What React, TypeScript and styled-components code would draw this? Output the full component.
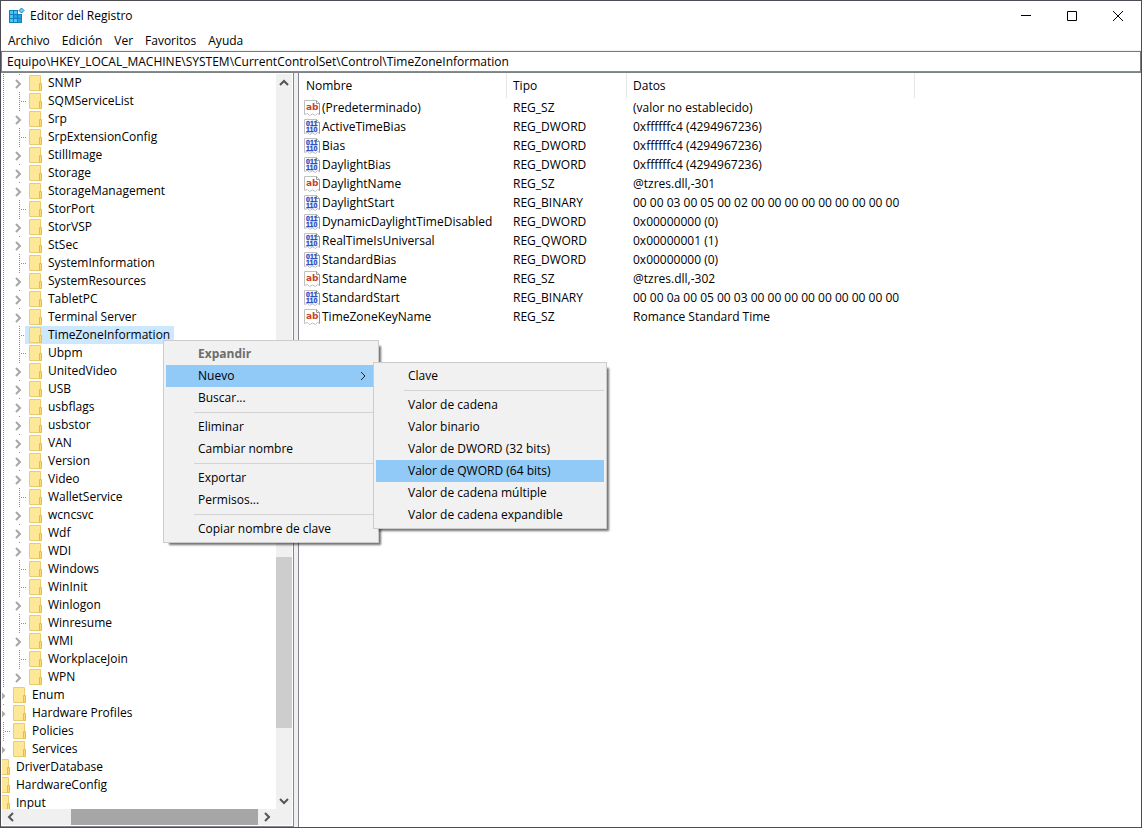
import React from 'react';
import styled, { createGlobalStyle, css } from 'styled-components';

const GlobalStyle = createGlobalStyle`
  * { box-sizing: border-box; }
  body { margin: 0; background: #fff; }
  body, button, input, table {
    font-family: "Open Sans", "Noto Sans", sans-serif;
    font-size: 12px;
    line-height: 18px;
    color: #000;
  }
  button { border: 0; padding: 0; background: none; }
  ul { list-style: none; margin: 0; padding: 0; }
`;

const Window = styled.div`
  position: relative;
  display: flex;
  flex-direction: column;
  height: 100vh;
  border: 1px solid #4b4c54;
  background: #fff;
  overflow: hidden;
`;

const TitleBar = styled.header`
  display: flex;
  align-items: center;
  height: 30px;
  padding-left: 8px;
`;

const Title = styled.h1`
  flex: 1;
  margin: 0;
  padding-left: 5px;
  font-size: 12px;
  font-weight: 400;
`;

const CaptionButton = styled.button`
  display: flex;
  align-items: center;
  justify-content: center;
  width: 46px;
  height: 28px;
`;

const MenuBar = styled.nav`
  display: flex;
  align-items: center;
  gap: 12px;
  height: 20px;
  padding-left: 7px;
  border-bottom: 1px solid #f0f0f0;
`;

const AddressBar = styled.input`
  width: 100%;
  height: 21px;
  padding: 0 5px;
  border: 1px solid #7a7a7a;
  border-bottom-color: #8a8a8a;
  background: #fff;
  outline: 0;
`;

const Panes = styled.main`
  flex: 1;
  display: flex;
  min-height: 0;
  border-top: 1px solid #7c8484;
`;

const TreePane = styled.section`
  display: grid;
  grid-template: minmax(0, 1fr) 16px / minmax(0, 1fr) 16px;
  flex: 0 0 293px;
  border: solid #828790;
  border-width: 0 1px 1px 0;
  padding: 1px;
`;

const Splitter = styled.div`
  flex: 0 0 4px;
  background: #f0f0f0;
`;

const TreeView = styled.div`
  overflow: hidden;
`;

const TreeList = styled.ul`
  margin-left: -7px;
`;

const TreeRow = styled.li`
  display: flex;
  height: 18px;
`;

const dots = css`
  background-image: repeating-linear-gradient(to bottom, #8c8c8c 0 1px, transparent 1px 2px);
  background-repeat: no-repeat;
  background-position: 8px 0;
`;

const Guide = styled.span<{ $short?: boolean }>`
  ${dots}
  display: flex;
  align-items: center;
  flex: 0 0 16px;
  background-size: 1px ${p => (p.$short ? '1px' : '100%')};
`;

const Branch = styled.span`
  width: 6px;
  height: 1px;
  margin-left: 9px;
  background: repeating-linear-gradient(to right, transparent 0 1px, #8c8c8c 1px 2px);
`;

const Expander = styled.button`
  display: flex;
  align-items: center;
  justify-content: center;
  width: 16px;
  height: 18px;
  padding: 2px 2px 0 0;
`;

const TreeLabel = styled.span<{ $selected?: boolean }>`
  display: flex;
  align-items: center;
  gap: 5px;
  margin-left: -2px;
  padding: 0 4px 0 2px;
  white-space: nowrap;
  background: ${p => (p.$selected ? '#cce8ff' : 'transparent')};
`;

const VScroll = styled.div`
  display: flex;
  flex-direction: column;
  background: #f0f0f0;
`;

const HScroll = styled.div`
  grid-column: 1 / -1;
  display: flex;
  padding-right: 17px;
  background: #f0f0f0;
`;

const ScrollButton = styled.button`
  display: flex;
  align-items: center;
  justify-content: center;
  flex: 0 0 17px;
`;

const Track = styled.div<{ $dir: 'row' | 'column' }>`
  flex: 1;
  display: flex;
  flex-direction: ${p => p.$dir};
`;

const Gap = styled.div<{ $grow: number }>`
  flex: ${p => p.$grow} 0 0;
`;

const Thumb = styled.div<{ $grow: number; $dark?: boolean }>`
  flex: ${p => p.$grow} 0 0;
  background: ${p => (p.$dark ? '#a6a6a6' : '#cdcdcd')};
`;

const ListPane = styled.section`
  flex: 1;
  min-width: 0;
  border-left: 1px solid #828790;
  overflow: hidden;
`;

const Table = styled.table`
  width: 100%;
  table-layout: fixed;
  border-collapse: separate;
  border-spacing: 0;
`;

const Col = styled.col<{ $w?: number }>`
  width: ${p => (p.$w ? p.$w + 'px' : 'auto')};
`;

const Th = styled.th`
  height: 25px;
  padding: 0 6px;
  border-right: 1px solid #e5e5e5;
  font-weight: 400;
  text-align: left;
  &:first-child { padding-left: 7px; }
  &:last-child { border-right: 0; }
`;

const Td = styled.td`
  height: 19px;
  padding: 0 6px;
  white-space: nowrap;
  line-height: 19px;
`;

const NameTd = styled(Td)`
  padding: 0 0 0 5px;
`;

const NameCell = styled.span`
  display: flex;
  align-items: center;
  gap: 2px;
`;

const Menu = styled.div<{ $left: number; $top: number; $width: number }>`
  position: absolute;
  left: ${p => p.$left}px;
  top: ${p => p.$top}px;
  width: ${p => p.$width}px;
  padding: 2px;
  border: 1px solid #ccc;
  background: #f1f1f1;
  box-shadow: 4px 4px 2px -2px rgba(0, 0, 0, 0.55);
`;

const MenuItem = styled.button<{ $active?: boolean }>`
  display: flex;
  align-items: center;
  justify-content: space-between;
  width: 100%;
  height: 22px;
  padding: 0 8px 0 32px;
  white-space: nowrap;
  background: ${p => (p.$active ? '#91c9f7' : 'transparent')};
  &:disabled { color: #6d6d6d; font-weight: 700; }
`;

const Separator = styled.hr`
  height: 1px;
  margin: 3px 0 3px 28px;
  border: 0;
  background: #d3d3d3;
`;

const RegistryIcon = () => (
  <svg width="16" height="16" viewBox="0 0 16 16" aria-hidden="true">
    <path d="M0 2h9v4h4v9H0z" fill="#0f7fc0" />
    <path d="M1 3h3v3H1zM5 3h3v3H5zM1 7h3v3H1zM1 11h3v3H1zM5 11h3v3H5z" fill="#4cc5f5" />
    <path d="M5 7h3v3H5zM9 7h3v3H9zM9 11h3v3H9z" fill="#22a0e0" />
    <path d="M12.500 0l2.500 2.500-2.500 2.500-2.500-2.500z" fill="#6fd2f5" stroke="#1583bd" />
  </svg>
);

const FolderIcon = () => (
  <svg width="16" height="18" viewBox="0 0 16 18" aria-hidden="true">
    <path d="M2.500 1.500h11v15h-11z" fill="#fee797" stroke="#e9cd74" />
    <path d="M12.500 9.500h2v7h-2z" fill="#fddc6b" stroke="#e6bd45" />
  </svg>
);

const Page = () => (
  <>
    <path d="M.5.5h12l3 3v11l-2-1-2 2-3-1.500-3 1.500-2-2-3 1z" fill="#fff" stroke="#c0c0c0" />
    <path d="M12.500.5v3h3v11" fill="none" stroke="#9a9a9a" />
  </>
);

const StringIcon = () => (
  <svg width="16" height="16" viewBox="0 0 16 16" aria-hidden="true">
    <Page />
    <text x="2" y="10" fontFamily="DejaVu Sans, sans-serif" fontWeight="700" fontSize="9" fill="#c8432b">ab</text>
  </svg>
);

const BinaryIcon = () => (
  <svg width="16" height="16" viewBox="0 0 16 16" aria-hidden="true">
    <Page />
    <g fontFamily="Liberation Sans, sans-serif" fontWeight="700" fontSize="7" fill="#1f4fc4" stroke="#1f4fc4" strokeWidth="0.300">
      <text x="2" y="7">011</text>
      <text x="2" y="13">110</text>
    </g>
  </svg>
);

const chevrons = {
  up: 'M1 7l4-4 4 4',
  down: 'M1 3l4 4 4-4',
  left: 'M7 1L3 5l4 4',
  right: 'M3 1l4 4-4 4',
};

const Chevron = ({ dir, color = '#555', width = 2 }: {
  dir: keyof typeof chevrons; color?: string; width?: number;
}) => (
  <svg width="10" height="10" viewBox="0 0 10 10" aria-hidden="true">
    <path d={chevrons[dir]} fill="none" stroke={color} strokeWidth={width} />
  </svg>
);

type Node = { name: string; level: 0 | 1 | 2; open: boolean };

// A leading "+" marks a key that has subkeys.
const controlKeys = [
  '+SNMP', 'SQMServiceList', '+Srp', 'SrpExtensionConfig', '+StillImage', '+Storage',
  '+StorageManagement', 'StorPort', '+StorVSP', '+StSec', 'SystemInformation',
  '+SystemResources', '+TabletPC', '+Terminal Server', 'TimeZoneInformation', 'Ubpm',
  '+UnitedVideo', '+USB', '+usbflags', '+usbstor', '+VAN', '+Version', '+Video',
  'WalletService', '+wcncsvc', '+Wdf', '+WDI', 'Windows', 'WinInit', '+Winlogon',
  'Winresume', '+WMI', 'WorkplaceJoin', '+WPN',
];
const toNodes = (names: string[], level: Node['level']): Node[] =>
  names.map(n => ({ name: n.replace('+', ''), level, open: n.startsWith('+') }));

const nodes: Node[] = [
  ...toNodes(controlKeys, 2),
  ...toNodes(['+Enum', '+Hardware Profiles', 'Policies', '+Services'], 1),
  ...toNodes(['DriverDatabase', 'HardwareConfig', 'Input'], 0),
];

const values: [string, string, string][] = [
  ['(Predeterminado)', 'REG_SZ', '(valor no establecido)'],
  ['ActiveTimeBias', 'REG_DWORD', '0xffffffc4 (4294967236)'],
  ['Bias', 'REG_DWORD', '0xffffffc4 (4294967236)'],
  ['DaylightBias', 'REG_DWORD', '0xffffffc4 (4294967236)'],
  ['DaylightName', 'REG_SZ', '@tzres.dll,-301'],
  ['DaylightStart', 'REG_BINARY', '00 00 03 00 05 00 02 00 00 00 00 00 00 00 00 00'],
  ['DynamicDaylightTimeDisabled', 'REG_DWORD', '0x00000000 (0)'],
  ['RealTimeIsUniversal', 'REG_QWORD', '0x00000001 (1)'],
  ['StandardBias', 'REG_DWORD', '0x00000000 (0)'],
  ['StandardName', 'REG_SZ', '@tzres.dll,-302'],
  ['StandardStart', 'REG_BINARY', '00 00 0a 00 05 00 03 00 00 00 00 00 00 00 00 00'],
  ['TimeZoneKeyName', 'REG_SZ', 'Romance Standard Time'],
];

const TreeItem = ({ node }: { node: Node }) => (
  <TreeRow role="treeitem" aria-level={node.level + 1} aria-selected={node.name === 'TimeZoneInformation'}>
    {node.level === 2 && <Guide />}
    {node.level > 0 && (
      <Guide $short={node.open}>
        {node.open ? (
          <Expander aria-label={`Expandir ${node.name}`}>
            <Chevron dir="right" color="#a6a6a6" />
          </Expander>
        ) : <Branch />}
      </Guide>
    )}
    <TreeLabel $selected={node.name === 'TimeZoneInformation'}>
      <FolderIcon />
      {node.name}
    </TreeLabel>
  </TreeRow>
);

export default function App() {
  return (
    <>
      <GlobalStyle />
      <Window>
        <TitleBar>
          <RegistryIcon />
          <Title>Editor del Registro</Title>
          <CaptionButton aria-label="Minimizar">
            <svg width="10" height="10"><path d="M0 4.500h10" stroke="#000" /></svg>
          </CaptionButton>
          <CaptionButton aria-label="Maximizar">
            <svg width="10" height="10"><path d="M.5.5h9v9h-9z" fill="none" stroke="#000" /></svg>
          </CaptionButton>
          <CaptionButton aria-label="Cerrar">
            <svg width="10" height="10"><path d="M0 0l10 10M10 0L0 10" stroke="#000" /></svg>
          </CaptionButton>
        </TitleBar>
        <MenuBar>
          {['Archivo', 'Edición', 'Ver', 'Favoritos', 'Ayuda'].map(m => <button key={m}>{m}</button>)}
        </MenuBar>
        <AddressBar
          aria-label="Ruta"
          defaultValue="Equipo\HKEY_LOCAL_MACHINE\SYSTEM\CurrentControlSet\Control\TimeZoneInformation"
        />
        <Panes>
          <TreePane>
            <TreeView>
              <TreeList role="tree">
                {nodes.map(n => <TreeItem key={n.name} node={n} />)}
              </TreeList>
            </TreeView>
            <VScroll>
              <ScrollButton aria-label="Subir"><Chevron dir="up" /></ScrollButton>
              <Track $dir="column">
                <Gap $grow={465} />
                <Thumb $grow={171} />
                <Gap $grow={64} />
              </Track>
              <ScrollButton aria-label="Bajar"><Chevron dir="down" /></ScrollButton>
            </VScroll>
            <HScroll>
              <ScrollButton aria-label="Izquierda"><Chevron dir="left" /></ScrollButton>
              <Track $dir="row">
                <Gap $grow={52} />
                <Thumb $grow={187} $dark />
              </Track>
              <ScrollButton aria-label="Derecha"><Chevron dir="right" /></ScrollButton>
            </HScroll>
          </TreePane>
          <Splitter />
          <ListPane>
            <Table>
              <colgroup>
                <Col $w={208} />
                <Col $w={120} />
                <Col $w={288} />
                <Col />
              </colgroup>
              <thead>
                <tr>
                  <Th>Nombre</Th>
                  <Th>Tipo</Th>
                  <Th>Datos</Th>
                  <Th aria-hidden="true" />
                </tr>
              </thead>
              <tbody>
                {values.map(([name, type, data]) => (
                  <tr key={name}>
                    <NameTd>
                      <NameCell>
                        {type === 'REG_SZ' ? <StringIcon /> : <BinaryIcon />}
                        {name}
                      </NameCell>
                    </NameTd>
                    <Td>{type}</Td>
                    <Td>{data}</Td>
                    <Td />
                  </tr>
                ))}
              </tbody>
            </Table>
          </ListPane>
        </Panes>

        <Menu role="menu" $left={162} $top={339} $width={216}>
          <MenuItem role="menuitem" disabled>Expandir</MenuItem>
          <MenuItem role="menuitem" $active aria-haspopup="menu">
            Nuevo
            <Chevron dir="right" color="#222" width={1} />
          </MenuItem>
          <MenuItem role="menuitem">Buscar...</MenuItem>
          <Separator />
          <MenuItem role="menuitem">Eliminar</MenuItem>
          <MenuItem role="menuitem">Cambiar nombre</MenuItem>
          <Separator />
          <MenuItem role="menuitem">Exportar</MenuItem>
          <MenuItem role="menuitem">Permisos...</MenuItem>
          <Separator />
          <MenuItem role="menuitem">Copiar nombre de clave</MenuItem>
          <Menu role="menu" $left={209} $top={21} $width={234}>
            <MenuItem role="menuitem">Clave</MenuItem>
            <Separator />
            <MenuItem role="menuitem">Valor de cadena</MenuItem>
            <MenuItem role="menuitem">Valor binario</MenuItem>
            <MenuItem role="menuitem">Valor de DWORD (32 bits)</MenuItem>
            <MenuItem role="menuitem" $active>Valor de QWORD (64 bits)</MenuItem>
            <MenuItem role="menuitem">Valor de cadena múltiple</MenuItem>
            <MenuItem role="menuitem">Valor de cadena expandible</MenuItem>
          </Menu>
        </Menu>
      </Window>
    </>
  );
}
